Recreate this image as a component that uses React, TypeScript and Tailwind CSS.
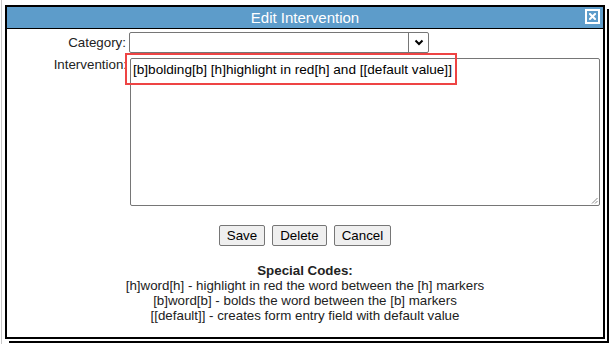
import React from "react";

export default function App() {
  return (
    <div className="relative w-[610px] h-[344px] bg-white overflow-hidden" style={{ fontFamily: '"Liberation Sans", Arial, sans-serif' }}>
      <div className="absolute left-[1px] top-0 h-full w-px bg-[#c8c8c8]" />
      <div className="pt-[5px] pl-[5px]">
        <div className="relative w-[600px] h-[334px] border-2 border-black bg-white shadow-[2px_2px_0_white,4px_4px_0_black] flex flex-col">
          <div className="relative h-[22px] bg-[#5d9cca] border-b border-black flex items-center justify-center">
            <span className="text-white text-[15px] leading-none">Edit Intervention</span>
            <div className="absolute right-[3px] top-[2px] w-[15px] h-[15px] border-2 border-white bg-[#5d9cca] flex items-center justify-center">
              <svg width="7" height="7" viewBox="0 0 7 7">
                <path d="M1 1L6 6M6 1L1 6" stroke="white" strokeWidth="2" strokeLinecap="square" />
              </svg>
            </div>
          </div>
          <div className="flex flex-col pt-[3px] text-[13.33px] text-[#222]">
            <div className="flex items-center h-[21px]">
              <div className="w-[119px] text-right">Category:</div>
              <div className="ml-[3px] w-[300px] h-[21px] border border-[#767676] rounded-[2px] flex bg-white">
                <div className="flex-1" />
                <div className="w-[20px] border-l border-[#767676] flex items-center justify-center">
                  <svg width="10" height="7" viewBox="0 0 10 7">
                    <path d="M1.5 1.5L5 5L8.5 1.5" stroke="black" strokeWidth="2" fill="none" />
                  </svg>
                </div>
              </div>
            </div>
            <div className="flex mt-[5px]">
              <div className="w-[120px] text-right -mt-[1px] leading-[15px]">Intervention:</div>
              <div className="ml-[3px] w-[470px] h-[148px] border border-[#767676] rounded-[2px] relative">
                <div className="pl-[2px] pt-[3px] leading-[15px] text-black text-[13.6px]">
                  [b]bolding[b] [h]highlight in red[h] and [[default value]]
                </div>
                <svg className="absolute right-[1px] bottom-[1px]" width="7" height="7" viewBox="0 0 7 7">
                  <path d="M6.5 1L1 6.5M6.5 4L4 6.5" stroke="#888" strokeWidth="1" />
                </svg>
              </div>
            </div>
            <div className="flex justify-center gap-[7px] mt-[19px]">
              <button className="h-[21px] px-[7px] bg-[#efefef] border border-[#767676] rounded-[2px] text-[13.33px] text-black leading-none">Save</button>
              <button className="h-[21px] px-[7px] bg-[#efefef] border border-[#767676] rounded-[2px] text-[13.33px] text-black leading-none">Delete</button>
              <button className="h-[21px] px-[7px] bg-[#efefef] border border-[#767676] rounded-[2px] text-[13.33px] text-black leading-none">Cancel</button>
            </div>
            <div className="flex flex-col items-center mt-[17px] leading-[15px] text-[#222]">
              <div className="font-bold">Special Codes:</div>
              <div>[h]word[h] - highlight in red the word between the [h] markers</div>
              <div>[b]word[b] - bolds the word between the [b] markers</div>
              <div>[[default]] - creates form entry field with default value</div>
            </div>
          </div>
          <div className="absolute left-[118px] top-[46px] w-[332px] h-[32px] border-2 border-[#ee4444] pointer-events-none" />
        </div>
      </div>
    </div>
  );
}
